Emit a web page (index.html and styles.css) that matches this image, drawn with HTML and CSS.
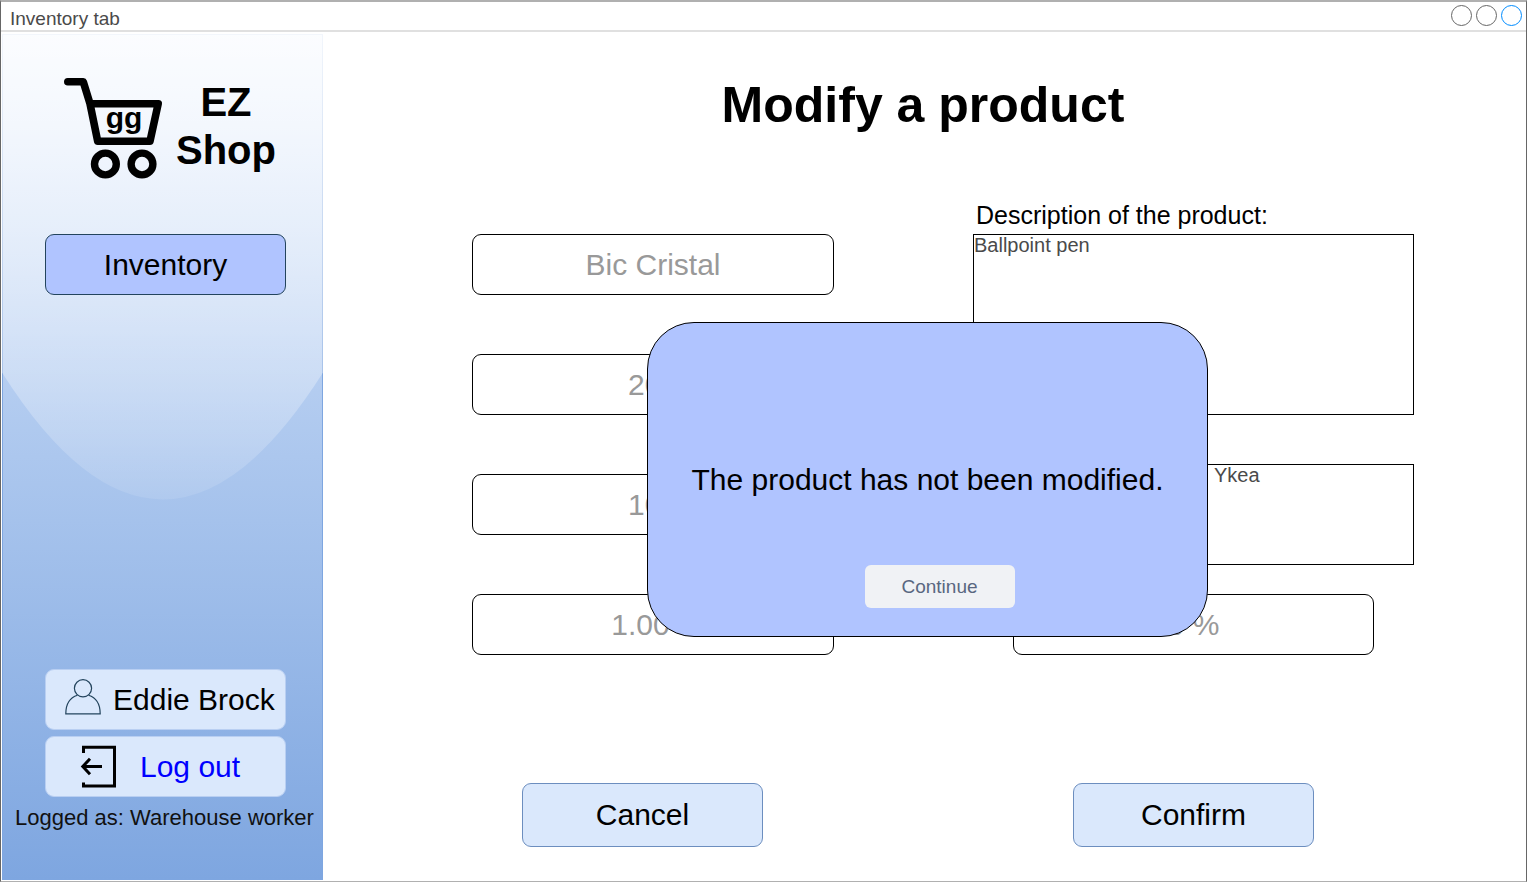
FILE: index.html
```html
<!DOCTYPE html>
<html lang="en">
<head>
<meta charset="utf-8">
<meta name="viewport" content="width=device-width, initial-scale=1">
<title>Inventory tab</title>
<link rel="stylesheet" href="styles.css">
</head>
<body>
<div class="window">
  <header class="titlebar">
    <span class="titlebar-text">Inventory tab</span>
    <div class="titlebar-controls">
      <button class="dot" type="button" aria-label="Minimize"></button>
      <button class="dot" type="button" aria-label="Maximize"></button>
      <button class="dot dot-active" type="button" aria-label="Close"></button>
    </div>
  </header>
  <div class="content">
    <aside class="sidebar">
      <svg class="glass" viewBox="0 0 321 847" preserveAspectRatio="none" aria-hidden="true">
        <defs>
          <linearGradient id="shine" x1="0" y1="0" x2="0" y2="1">
            <stop offset="0" stop-color="#fff" stop-opacity="0.9"/>
            <stop offset="1" stop-color="#fff" stop-opacity="0.1"/>
          </linearGradient>
        </defs>
        <path d="M0 0H321V339Q160.500 593 0 339Z" fill="url(#shine)"/>
      </svg>
      <div class="logo">
        <svg class="cart" viewBox="0 0 102 102" aria-hidden="true">
          <g fill="none" stroke="#000" stroke-linecap="round" stroke-linejoin="round">
            <path d="M5.800 3.800H21.300L28 25.700L35.700 63.300H88L96.200 25.700H28" stroke-width="7.600"/>
            <circle cx="43.400" cy="86" r="10.900" stroke-width="7.400"/>
            <circle cx="80" cy="86" r="10.900" stroke-width="7.400"/>
          </g>
          <text class="cart-text" x="62" y="50" text-anchor="middle">gg</text>
        </svg>
        <div class="brand">EZ<br>Shop</div>
      </div>
      <nav class="nav">
        <button class="nav-item" type="button">Inventory</button>
      </nav>
      <div class="account">
        <button class="account-item user" type="button">
          <svg class="user-icon" viewBox="0 0 36 41" aria-hidden="true">
            <g fill="none" stroke="#23445d" stroke-width="1.200">
              <circle cx="18" cy="9.300" r="8.600"/>
              <path d="M12.500 16.200C5 18.500 0.800 24.500 0.800 34.800H35.200C35.200 24.500 31 18.500 23.500 16.200"/>
            </g>
          </svg>
          <span>Eddie Brock</span>
        </button>
        <a class="account-item logout" href="#">
          <svg class="logout-icon" viewBox="0 0 37 43" aria-hidden="true">
            <g fill="none" stroke="#000" stroke-width="3">
              <path d="M3.500 8V2.200H34.500V41H3.500V37.500"/>
              <path d="M3 21.500H22M10 13.800L2.800 21.500L10 29.200"/>
            </g>
          </svg>
          <span>Log out</span>
        </a>
      </div>
      <p class="role">Logged as: Warehouse worker</p>
    </aside>
    <main class="main">
      <h1 class="heading">Modify a product</h1>
      <form class="form">
        <div class="fields">
          <div class="column">
            <input class="field" type="text" aria-label="Product name" value="Bic Cristal">
            <input class="field" type="text" aria-label="Quantity" value="200">
            <input class="field" type="text" aria-label="Threshold" value="100">
            <input class="field" type="text" aria-label="Price" value="1.00 €">
          </div>
          <div class="column-right">
            <label class="label" for="description">Description of the product:</label>
            <textarea class="area area-tall" id="description">Ballpoint pen</textarea>
            <textarea class="area area-short" aria-label="Supplier">Ykea</textarea>
            <input class="field field-discount" type="text" aria-label="Discount" value="0 %">
          </div>
        </div>
        <div class="actions">
          <button class="action" type="button">Cancel</button>
          <button class="action" type="button">Confirm</button>
        </div>
      </form>
      <div class="overlay">
        <section class="modal" role="alertdialog" aria-labelledby="message">
          <p class="message" id="message">The product has not been modified.</p>
          <button class="continue" type="button">Continue</button>
        </section>
      </div>
    </main>
  </div>
</div>
</body>
</html>
```
FILE: styles.css
```css
* {
  box-sizing: border-box;
}

body {
  margin: 0;
  background: #fff;
  color: #000;
  font-family: "Liberation Sans", Arial, sans-serif;
}

button,
input,
textarea {
  margin: 0;
  padding: 0;
  font-family: inherit;
}

.window {
  display: flex;
  flex-direction: column;
  min-height: 100vh;
  border: 1px solid #666;
  border-top: 2px solid #b0b0b0;
  border-bottom-color: #b0b0b0;
}

.titlebar {
  display: flex;
  justify-content: space-between;
  height: 30px;
  padding: 3px 4px 0 9px;
  border-bottom: 2px solid #e0e0e0;
}

.titlebar-text {
  color: #4a4a4a;
  font-size: 19px;
  line-height: 28px;
}

.titlebar-controls {
  display: flex;
  gap: 4px;
}

.dot {
  width: 21px;
  height: 21px;
  border: 1px solid #666;
  border-radius: 50%;
  background: #fff;
}

.dot-active {
  border-color: #008cff;
}

.content {
  display: flex;
  flex: 1;
}

.sidebar {
  position: relative;
  z-index: 0;
  display: flex;
  flex: none;
  flex-direction: column;
  width: 321px;
  margin: 2px 0 1px 1px;
  padding-bottom: 49px;
  background: linear-gradient(#dae8fc, #7ea6e0);
  box-shadow: inset 0 0 0 1px #7ea6e0;
}

.glass {
  position: absolute;
  z-index: -1;
  inset: 0;
  width: 100%;
  height: 100%;
}

.logo {
  display: flex;
  gap: 12px;
  padding: 44px 0 0 60px;
}

.cart {
  width: 102px;
  height: 102px;
}

.cart-text {
  font-size: 30px;
  font-weight: bold;
}

.brand {
  font-size: 40px;
  font-weight: bold;
  line-height: 48px;
  text-align: center;
}

.nav {
  padding: 54px 37px 0 43px;
}

.nav-item {
  width: 100%;
  height: 61px;
  border: 1px solid #23445d;
  border-radius: 9px;
  background: #b0c4ff;
  color: #000;
  font-size: 30px;
}

.account {
  display: flex;
  flex-direction: column;
  gap: 6px;
  margin-top: auto;
  padding: 0 37px 0 43px;
}

.account-item {
  display: flex;
  align-items: center;
  height: 61px;
  border: 1px solid #b9cff2;
  border-radius: 9px;
  background: #dae8fc;
  color: #000;
  font-size: 30px;
  text-decoration: none;
  white-space: nowrap;
}

.user {
  gap: 12px;
  padding-left: 19px;
}

.user-icon {
  width: 36px;
  height: 41px;
}

.logout {
  gap: 23px;
  padding-left: 34px;
  color: #00f;
}

.logout-icon {
  width: 37px;
  height: 43px;
}

.role {
  margin: 8px 0 0;
  padding-left: 4px;
  color: #111;
  font-size: 22px;
  line-height: 26px;
  text-align: center;
}

.main {
  position: relative;
  flex: 1;
  min-width: 0;
  padding: 43px 0 33px;
}

.heading {
  margin: 0 0 65px;
  padding-right: 3px;
  font-size: 50px;
  line-height: 60px;
  text-align: center;
}

.fields {
  display: grid;
  grid-template-columns: minmax(0, 362fr) minmax(0, 441fr);
  align-items: end;
  gap: 139px;
  padding: 0 112px 0 149px;
}

.column {
  display: flex;
  flex-direction: column;
  gap: 59px;
}

.column-right {
  display: flex;
  flex-direction: column;
}

.field {
  width: 100%;
  height: 61px;
  border: 1px solid #000;
  border-radius: 9px;
  background: #fff;
  color: #999;
  font-size: 30px;
  text-align: center;
}

.field-discount {
  align-self: center;
  width: 82%;
}

.label {
  margin-bottom: 4px;
  padding-left: 3px;
  font-size: 25px;
  line-height: 30px;
}

.area {
  width: 100%;
  border: 1px solid #000;
  background: #fff;
  color: #4a4a4a;
  font-size: 20px;
  line-height: 20px;
  resize: none;
}

.area-tall {
  height: 181px;
  margin-bottom: 49px;
}

.area-short {
  height: 101px;
  margin-bottom: 29px;
  padding-left: 240px;
}

.actions {
  display: flex;
  justify-content: space-between;
  margin-top: 128px;
  padding: 0 212px 0 199px;
}

.action {
  width: 241px;
  height: 64px;
  border: 1px solid #6c8ebf;
  border-radius: 9px;
  background: #dae8fc;
  color: #000;
  font-size: 30px;
}

.overlay {
  position: absolute;
  inset: 0;
  display: flex;
  align-items: center;
  justify-content: center;
  padding: 46px 0 0 6px;
}

.modal {
  display: flex;
  flex-direction: column;
  align-items: center;
  width: 561px;
  padding: 139px 24px 28px;
  border: 1px solid #000;
  border-radius: 47px;
  background: #b0c4ff;
}

.message {
  margin: 0 0 67px;
  font-size: 30px;
  line-height: 36px;
  text-align: center;
}

.continue {
  width: 150px;
  height: 43px;
  margin-left: 24px;
  border: 0;
  border-radius: 6px;
  background: #f0f2f5;
  color: #596780;
  font-size: 19px;
}
```
